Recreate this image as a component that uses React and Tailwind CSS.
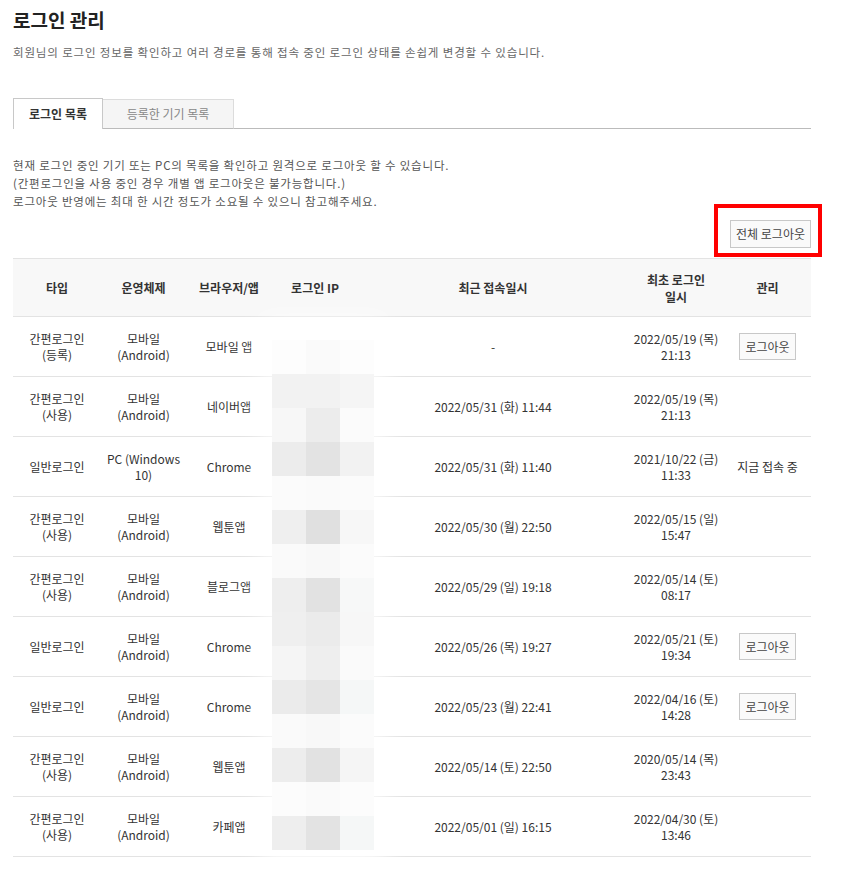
import React from 'react';

const rows = [
  { type: ['간편로그인', '(등록)'], os: ['모바일', '(Android)'], app: '모바일 앱', ip: '-', recent: '-', first: ['2022/05/19 (목)', '21:13'], manage: 'button' },
  { type: ['간편로그인', '(사용)'], os: ['모바일', '(Android)'], app: '네이버앱', ip: '', recent: '2022/05/31 (화) 11:44', first: ['2022/05/19 (목)', '21:13'] },
  { type: ['일반로그인'], os: ['PC (Windows', '10)'], app: 'Chrome', ip: '', recent: '2022/05/31 (화) 11:40', first: ['2021/10/22 (금)', '11:33'], manage: 'current' },
  { type: ['간편로그인', '(사용)'], os: ['모바일', '(Android)'], app: '웹툰앱', ip: '', recent: '2022/05/30 (월) 22:50', first: ['2022/05/15 (일)', '15:47'] },
  { type: ['간편로그인', '(사용)'], os: ['모바일', '(Android)'], app: '블로그앱', ip: '', recent: '2022/05/29 (일) 19:18', first: ['2022/05/14 (토)', '08:17'] },
  { type: ['일반로그인'], os: ['모바일', '(Android)'], app: 'Chrome', ip: '', recent: '2022/05/26 (목) 19:27', first: ['2022/05/21 (토)', '19:34'], manage: 'button' },
  { type: ['일반로그인'], os: ['모바일', '(Android)'], app: 'Chrome', ip: '', recent: '2022/05/23 (월) 22:41', first: ['2022/04/16 (토)', '14:28'], manage: 'button' },
  { type: ['간편로그인', '(사용)'], os: ['모바일', '(Android)'], app: '웹툰앱', ip: '', recent: '2022/05/14 (토) 22:50', first: ['2020/05/14 (목)', '23:43'] },
  { type: ['간편로그인', '(사용)'], os: ['모바일', '(Android)'], app: '카페앱', ip: '', recent: '2022/05/01 (일) 16:15', first: ['2022/04/30 (토)', '13:46'] },
];

// pixelated blur over the IP column: [left, middle, right]
const mosaic = [
  ['bg-[#fdfdfd]', 'bg-[#fafafa]', 'bg-[#fdfdfd]'],
  ['bg-[#f2f2f2]', 'bg-[#f2f2f2]', 'bg-[#f5f5f5]'],
  ['bg-[#f7f7f7]', 'bg-[#ececec]', 'bg-[#fbfbfb]'],
  ['bg-[#ececec]', 'bg-[#e3e3e3]', 'bg-[#f2f2f2]'],
  ['bg-[#fbfbfb]', 'bg-[#fafafa]', 'bg-[#fbfbfb]'],
  ['bg-[#efefef]', 'bg-[#e0e0e0]', 'bg-[#f7f7f7]'],
  ['bg-[#fafafa]', 'bg-[#f8f8f8]', 'bg-[#fbfbfb]'],
  ['bg-[#eeeeee]', 'bg-[#e2e2e2]', 'bg-[#f7f8f8]'],
  ['bg-[#efefef]', 'bg-[#ebebeb]', 'bg-[#f7f7f7]'],
  ['bg-[#f5f5f5]', 'bg-[#eeeeee]', 'bg-[#fafafa]'],
  ['bg-[#ebebeb]', 'bg-[#e5e5e5]', 'bg-[#f5f7f7]'],
  ['bg-[#fafafa]', 'bg-[#f8f8f8]', 'bg-[#fbfbfb]'],
  ['bg-[#ededed]', 'bg-[#e2e2e2]', 'bg-[#f5f5f5]'],
  ['bg-[#fcfcfc]', 'bg-[#fafafa]', 'bg-[#fcfcfc]'],
  ['bg-[#eeeeee]', 'bg-[#e3e3e3]', 'bg-[#f5f7f7]'],
];

const SmallButton = ({ children, className = '' }) => (
  <button className={`border border-[#c8c8c8] bg-[#fafafa] text-[#444] text-[12px] leading-none ${className}`}>
    {children}
  </button>
);

const Lines = ({ items }) => (
  <div className="leading-[16px]">
    {items.map((t, i) => (
      <div key={i}>{t}</div>
    ))}
  </div>
);

const LoginManage = () => {
  return (
    <div className="min-h-[888px] bg-white text-[#333] font-['Noto_Sans_CJK_KR','Noto_Sans',sans-serif]">
      <div className="w-[798px] ml-[13px] pt-[5px]">
        <h1 className="text-[19px] font-bold text-[#222] leading-[30px]">로그인 관리</h1>
        <p className="mt-[8px] text-[11.5px] tracking-[0.85px] text-[#666] leading-[18px]">
          회원님의 로그인 정보를 확인하고 여러 경로를 통해 접속 중인 로그인 상태를 손쉽게 변경할 수 있습니다.
        </p>

        <div className="mt-[37px] flex items-end h-[31px]">
          <div className="h-[31px] w-[90px] border border-[#c8c8c8] border-b-0 bg-white flex items-center justify-center text-[12px] font-bold text-[#333]">
            로그인 목록
          </div>
          <div className="h-[30px] w-[131px] border border-[#dcdcdc] border-l-0 border-b-[#bbbbbb] bg-[#f5f5f5] flex items-center justify-center text-[12px] text-[#888]">
            등록한 기기 목록
          </div>
          <div className="flex-1 border-b border-[#bbbbbb]"></div>
        </div>

        <div className="mt-[27px] text-[11.5px] tracking-[0.8px] text-[#555] leading-[18px]">
          <p>현재 로그인 중인 기기 또는 PC의 목록을 확인하고 원격으로 로그아웃 할 수 있습니다.</p>
          <p>(간편로그인을 사용 중인 경우 개별 앱 로그아웃은 불가능합니다.)</p>
          <p>로그아웃 반영에는 최대 한 시간 정도가 소요될 수 있으니 참고해주세요.</p>
        </div>

        <div className="flex justify-end mt-[10px] mb-[10px] relative">
          <SmallButton className="w-[81px] h-[28px]">전체 로그아웃</SmallButton>
          <div className="absolute right-[-11px] top-[-16px] w-[108px] h-[53px] border-[4px] border-[#ff0000]"></div>
        </div>

        <div className="relative">
          <table className="w-full table-fixed border-collapse text-[12px] text-center">
            <colgroup>
              <col className="w-[88px]" />
              <col className="w-[85px]" />
              <col className="w-[86px]" />
              <col className="w-[86px]" />
              <col className="w-[270px]" />
              <col className="w-[96px]" />
              <col className="w-[87px]" />
            </colgroup>
            <thead>
              <tr className="bg-[#f8f8f8] border-t border-b border-[#e3e3e3] h-[58px]">
                <th className="font-bold">타입</th>
                <th className="font-bold">운영체제</th>
                <th className="font-bold">브라우저/앱</th>
                <th className="font-bold">로그인 IP</th>
                <th className="font-bold">최근 접속일시</th>
                <th className="font-bold leading-[17px]">최초 로그인<br />일시</th>
                <th className="font-bold">관리</th>
              </tr>
            </thead>
            <tbody>
              {rows.map((r, i) => (
                <tr key={i} className="border-b border-[#e3e3e3] h-[60px]">
                  <td><Lines items={r.type} /></td>
                  <td><Lines items={r.os} /></td>
                  <td>{r.app}</td>
                  <td>{r.ip}</td>
                  <td>{r.recent}</td>
                  <td><Lines items={r.first} /></td>
                  <td>
                    {r.manage === 'button' && <SmallButton className="w-[57px] h-[27px]">로그아웃</SmallButton>}
                    {r.manage === 'current' && <span>지금 접속 중</span>}
                  </td>
                </tr>
              ))}
            </tbody>
          </table>

          <div className="absolute left-[247px] top-[60px] w-[126px] h-[560px] bg-white/70 blur-md pointer-events-none"></div>
          <div className="absolute left-[259px] top-[82px] flex flex-col pointer-events-none">
            {mosaic.map((m, i) => (
              <div key={i} className="flex">
                <div className={`w-[34px] h-[34px] ${m[0]}`}></div>
                <div className={`w-[34px] h-[34px] ${m[1]}`}></div>
                <div className={`w-[34px] h-[34px] ${m[2]}`}></div>
              </div>
            ))}
          </div>
        </div>
      </div>
    </div>
  );
};

export default LoginManage;
